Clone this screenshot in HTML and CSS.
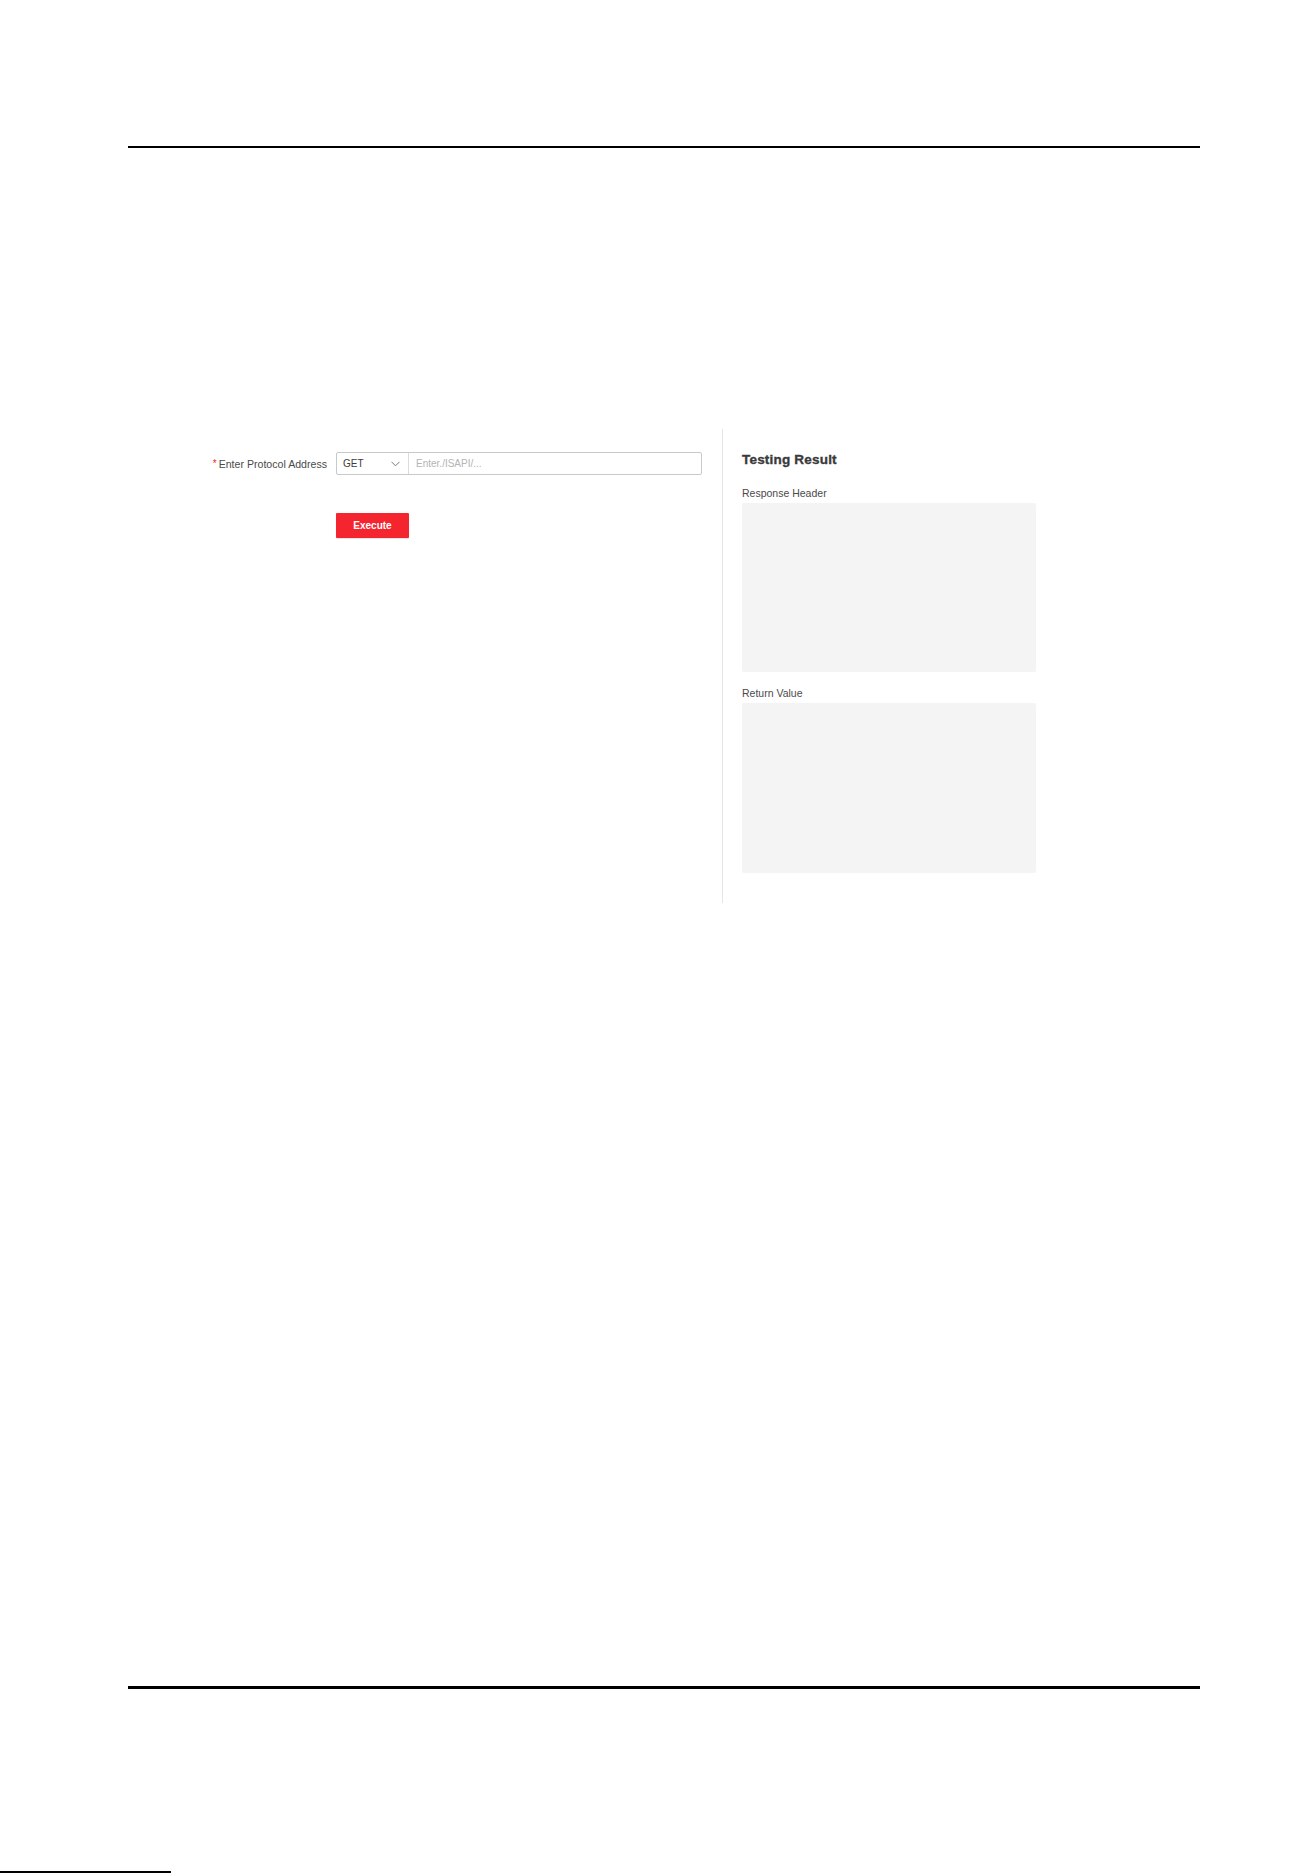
FILE: index.html
```html
<!DOCTYPE html>
<html lang="en">
<head>
<meta charset="utf-8">
<title>Protocol Test</title>
<link rel="stylesheet" href="styles.css">
</head>
<body>
<div class="page">
  <div class="rule rule-top"></div>
  <div class="main">
    <div class="left">
      <div class="form-row">
        <label class="form-label"><span class="req">*</span>Enter Protocol Address</label>
        <div class="field">
          <div class="select">
            <span class="select-value">GET</span>
            <svg class="chevron" width="9" height="6" viewBox="0 0 9 6"><polyline points="0.5,0.8 4.5,4.8 8.5,0.8" fill="none" stroke="#777" stroke-width="1"/></svg>
          </div>
          <div class="input"><span class="placeholder">Enter./ISAPI/...</span></div>
        </div>
      </div>
      <div class="actions">
        <button class="btn-exec">Execute</button>
      </div>
    </div>
    <div class="right">
      <h3 class="result-title">Testing Result</h3>
      <div class="result-label">Response Header</div>
      <div class="result-box box-header"></div>
      <div class="result-label label-second">Return Value</div>
      <div class="result-box box-return"></div>
    </div>
  </div>
  <div class="rule rule-bottom"></div>
  <div class="edge">
    <div class="edge-line"></div>
  </div>
</div>
</body>
</html>
```

FILE: styles.css
```css
html, body {
  margin: 0;
  padding: 0;
  background: #ffffff;
}

body {
  font-family: "Liberation Sans", Arial, sans-serif;
  font-size: 10.5px;
  color: #333333;
}

.page {
  width: 1313px;
  height: 1873px;
  display: flex;
  flex-direction: column;
  overflow: hidden;
}

.rule {
  margin-left: 128px;
  width: 1072px;
  background: #000000;
}

.rule-top {
  margin-top: 146px;
  height: 2px;
}

.rule-bottom {
  margin-top: auto;
  height: 3px;
}

.main {
  margin-top: 281px;
  margin-left: 128px;
  display: flex;
  align-items: stretch;
}

.left {
  width: 595px;
  padding-top: 23px;
  border-right: 1px solid #e6e6e6;
  box-sizing: border-box;
}

.form-row {
  display: flex;
  align-items: center;
}

.form-label {
  width: 208px;
  padding-right: 9px;
  box-sizing: border-box;
  text-align: right;
  color: #4a4a4a;
  font-size: 10.6px;
  line-height: 14px;
  white-space: nowrap;
}

.req {
  color: #f5222d;
  margin-right: 2px;
  font-size: 10px;
  vertical-align: 1px;
}

.field {
  display: flex;
  width: 366px;
  height: 23px;
  border: 1px solid #c9c9c9;
  border-radius: 2px;
  box-sizing: border-box;
}

.select {
  width: 72px;
  box-sizing: border-box;
  border-right: 1px solid #dcdcdc;
  display: flex;
  align-items: center;
  justify-content: space-between;
  padding: 0 8px 0 6px;
}

.select-value {
  color: #3c3c3c;
  font-size: 10px;
}

.chevron {
  display: block;
  margin-top: 1px;
}

.input {
  flex: 1;
  display: flex;
  align-items: center;
  padding-left: 7px;
}

.placeholder {
  color: #b4b4b4;
  font-size: 10px;
}

.actions {
  margin-top: 38px;
  padding-left: 208px;
}

.btn-exec {
  width: 73px;
  height: 25px;
  border: none;
  border-radius: 1px;
  background: #f5252f;
  color: #ffffff;
  font-family: "Liberation Sans", Arial, sans-serif;
  font-weight: bold;
  font-size: 10px;
  padding: 0;
  box-shadow: 0 1px 1px rgba(0,0,0,0.12);
  cursor: pointer;
}

.right {
  padding: 23px 0 30px 19px;
  width: 313px;
  box-sizing: border-box;
}

.result-title {
  margin: 0;
  font-size: 13.5px;
  font-weight: bold;
  line-height: 16px;
  color: #3a3a3a;
  letter-spacing: 0.2px;
  -webkit-text-stroke: 0.35px #3a3a3a;
}

.result-label {
  margin-top: 18px;
  line-height: 14px;
  color: #4a4a4a;
}

.label-second {
  margin-top: 14px;
}

.result-box {
  margin-top: 3px;
  width: 294px;
  height: 169px;
  background: #f4f4f4;
  border-radius: 2px;
}

.box-return {
  height: 170px;
}

.edge {
  margin-top: 182px;
  height: 2px;
  display: flex;
}

.edge-line {
  width: 171px;
  height: 2px;
  background: #000000;
}
```
